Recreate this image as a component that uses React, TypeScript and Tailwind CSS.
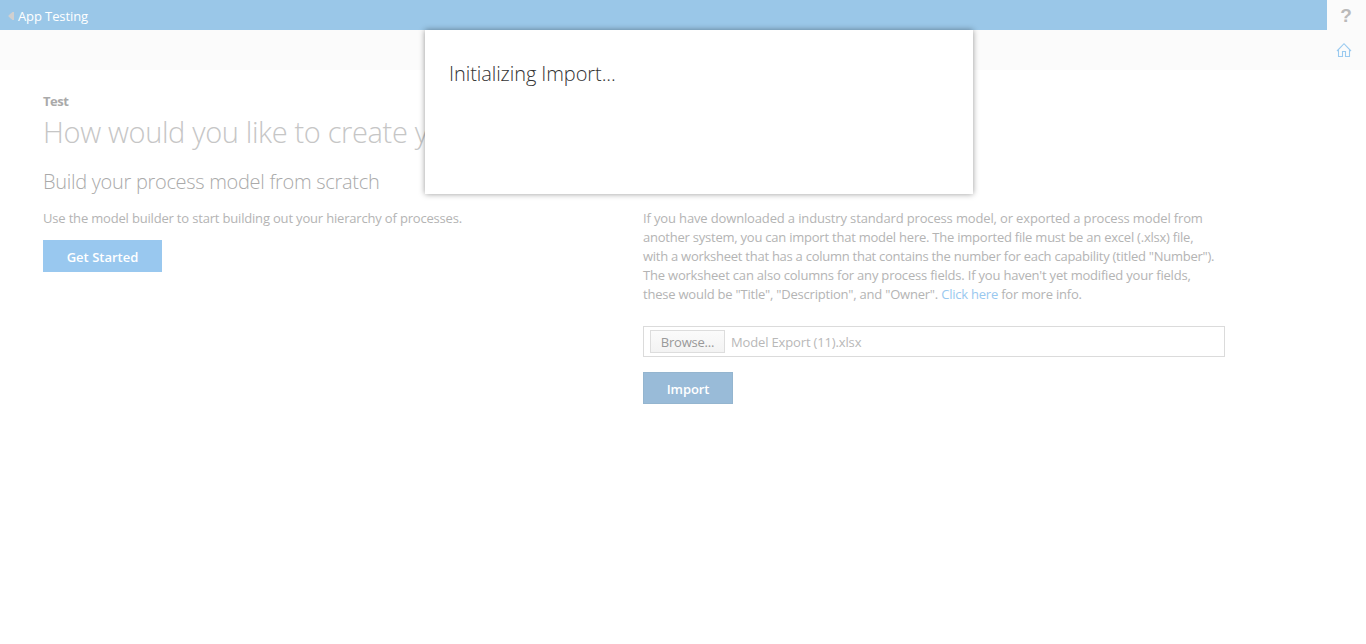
import React from "react";

const paragraph = [
  { text: "If you have downloaded a industry standard process model, or exported a process model from", spacing: "tracking-[-0.143px]" },
  { text: "another system, you can import that model here. The imported file must be an excel (.xlsx) file,", spacing: "tracking-[-0.23px]" },
  { text: "with a worksheet that has a column that contains the number for each capability (titled \"Number\").", spacing: "tracking-[-0.26px]" },
  { text: "The worksheet can also columns for any process fields. If you haven't yet modified your fields,", spacing: "tracking-[-0.2px]" },
];

function TopBar() {
  return (
    <header className="flex h-[30px] bg-[#fbfbfb]">
      <div className="flex w-[1327px] items-center bg-[#9ac7e8] pl-2 pt-[3px] text-[13px] tracking-[-0.1px] text-white">
        <svg className="mb-px mr-1 h-2 w-1.5" viewBox="0 0 6 8" fill="#d0d0d0">
          <path d="M6 0v8H4.5L0.5 4.5v-1L4.5 0z" />
        </svg>
        <span className="whitespace-nowrap">App Testing</span>
      </div>
      <div className="flex flex-1 items-center justify-center pr-px pt-[2px] font-['Liberation_Sans'] text-[19px] font-bold text-[#bababa]">
        <span>?</span>
      </div>
    </header>
  );
}

function HomeBar() {
  return (
    <div className="flex h-10 items-center justify-end bg-[#fbfbfb] pr-3.5">
      <svg width="16" height="16" viewBox="0 0 16 16" fill="none" stroke="#9acaf0" strokeWidth="1.1">
        <path d="M1 9 8 1.7 15 9M2.5 8v6.5h4v-5h3v5h4V8" />
      </svg>
    </div>
  );
}

function BuildPanel() {
  return (
    <section className="w-[600px]">
      <h2 className="h-[26px] whitespace-nowrap text-[20px] font-light leading-[26px] tracking-[-0.3px] text-[#aaaaaa]">Build your process model from scratch</h2>
      <p className="mt-[14px] h-[19px] whitespace-nowrap text-[13px] leading-[19px] tracking-[-0.18px] text-[#b4b4b4]">
        Use the model builder to start building out your hierarchy of processes.
      </p>
      <button className="mt-3 flex h-8 w-[119px] items-center justify-center bg-[#99c8ef] pt-[3px] text-[13px] font-semibold text-white">
        Get Started
      </button>
    </section>
  );
}

function ImportPanel() {
  return (
    <section className="w-[582px] pt-10">
      <div className="text-[13px] leading-[19px] text-[#b4b4b4]">
        {paragraph.map((line) => (
          <div key={line.text} className="whitespace-nowrap"><span className={line.spacing}>{line.text}</span></div>
        ))}
        <div className="whitespace-nowrap">
          <span className="tracking-[-0.22px]">these would be "Title", "Description", and "Owner". <a className="text-[#99c8ef]">Click here</a> for more info.</span>
        </div>
      </div>
      <div className="mt-[22px] flex h-[31px] items-center border border-[#dbdbdb] pl-1.5 text-[13px]">
        <button className="h-[23px] w-[75px] border border-[#dddddd] bg-linear-to-b from-[#fbfbfb] to-[#f3f3f3] pt-[2px] leading-[19px] tracking-[-0.2px] text-[#999999]">Browse...</button>
        <span className="ml-1.5 whitespace-nowrap pt-[2px] tracking-[-0.15px] text-[#b8b8b8]">Model Export (11).xlsx</span>
      </div>
      <button className="mt-[15px] flex h-8 w-[90px] items-center justify-center border border-[#94b5cf] bg-[#99bbd8] pt-[3px] text-[13px] font-semibold tracking-[-0.1px] text-white">
        Import
      </button>
    </section>
  );
}

export default function App() {
  return (
    <div className="relative h-[644px] w-[1366px] overflow-hidden bg-white font-['Open_Sans','Noto_Sans',sans-serif]">
      <TopBar />
      <HomeBar />
      <main className="pl-[43px] pt-[22px]">
        <div className="h-[19px] text-[13px] font-bold leading-[19px] tracking-[-0.5px] text-[#aaaaaa]"><span>Test</span></div>
        <h1 className="h-10 whitespace-nowrap pt-px text-[29px] font-light leading-10 tracking-[-0.36px] text-[#c6c6c6]"><span>How would you like to create your process model?</span></h1>
        <div className="mt-[18px] flex">
          <BuildPanel />
          <ImportPanel />
        </div>
      </main>
      <div role="dialog" className="absolute left-[425px] top-[30px] h-[164px] w-[548px] bg-white pl-6 pt-[29px] shadow-[0_0_6px_0_rgba(0,0,0,0.4)]">
        <span className="whitespace-nowrap text-[20px] font-light leading-[30px] tracking-[-0.08px] text-[#333333]">Initializing Import...</span>
      </div>
    </div>
  );
}
